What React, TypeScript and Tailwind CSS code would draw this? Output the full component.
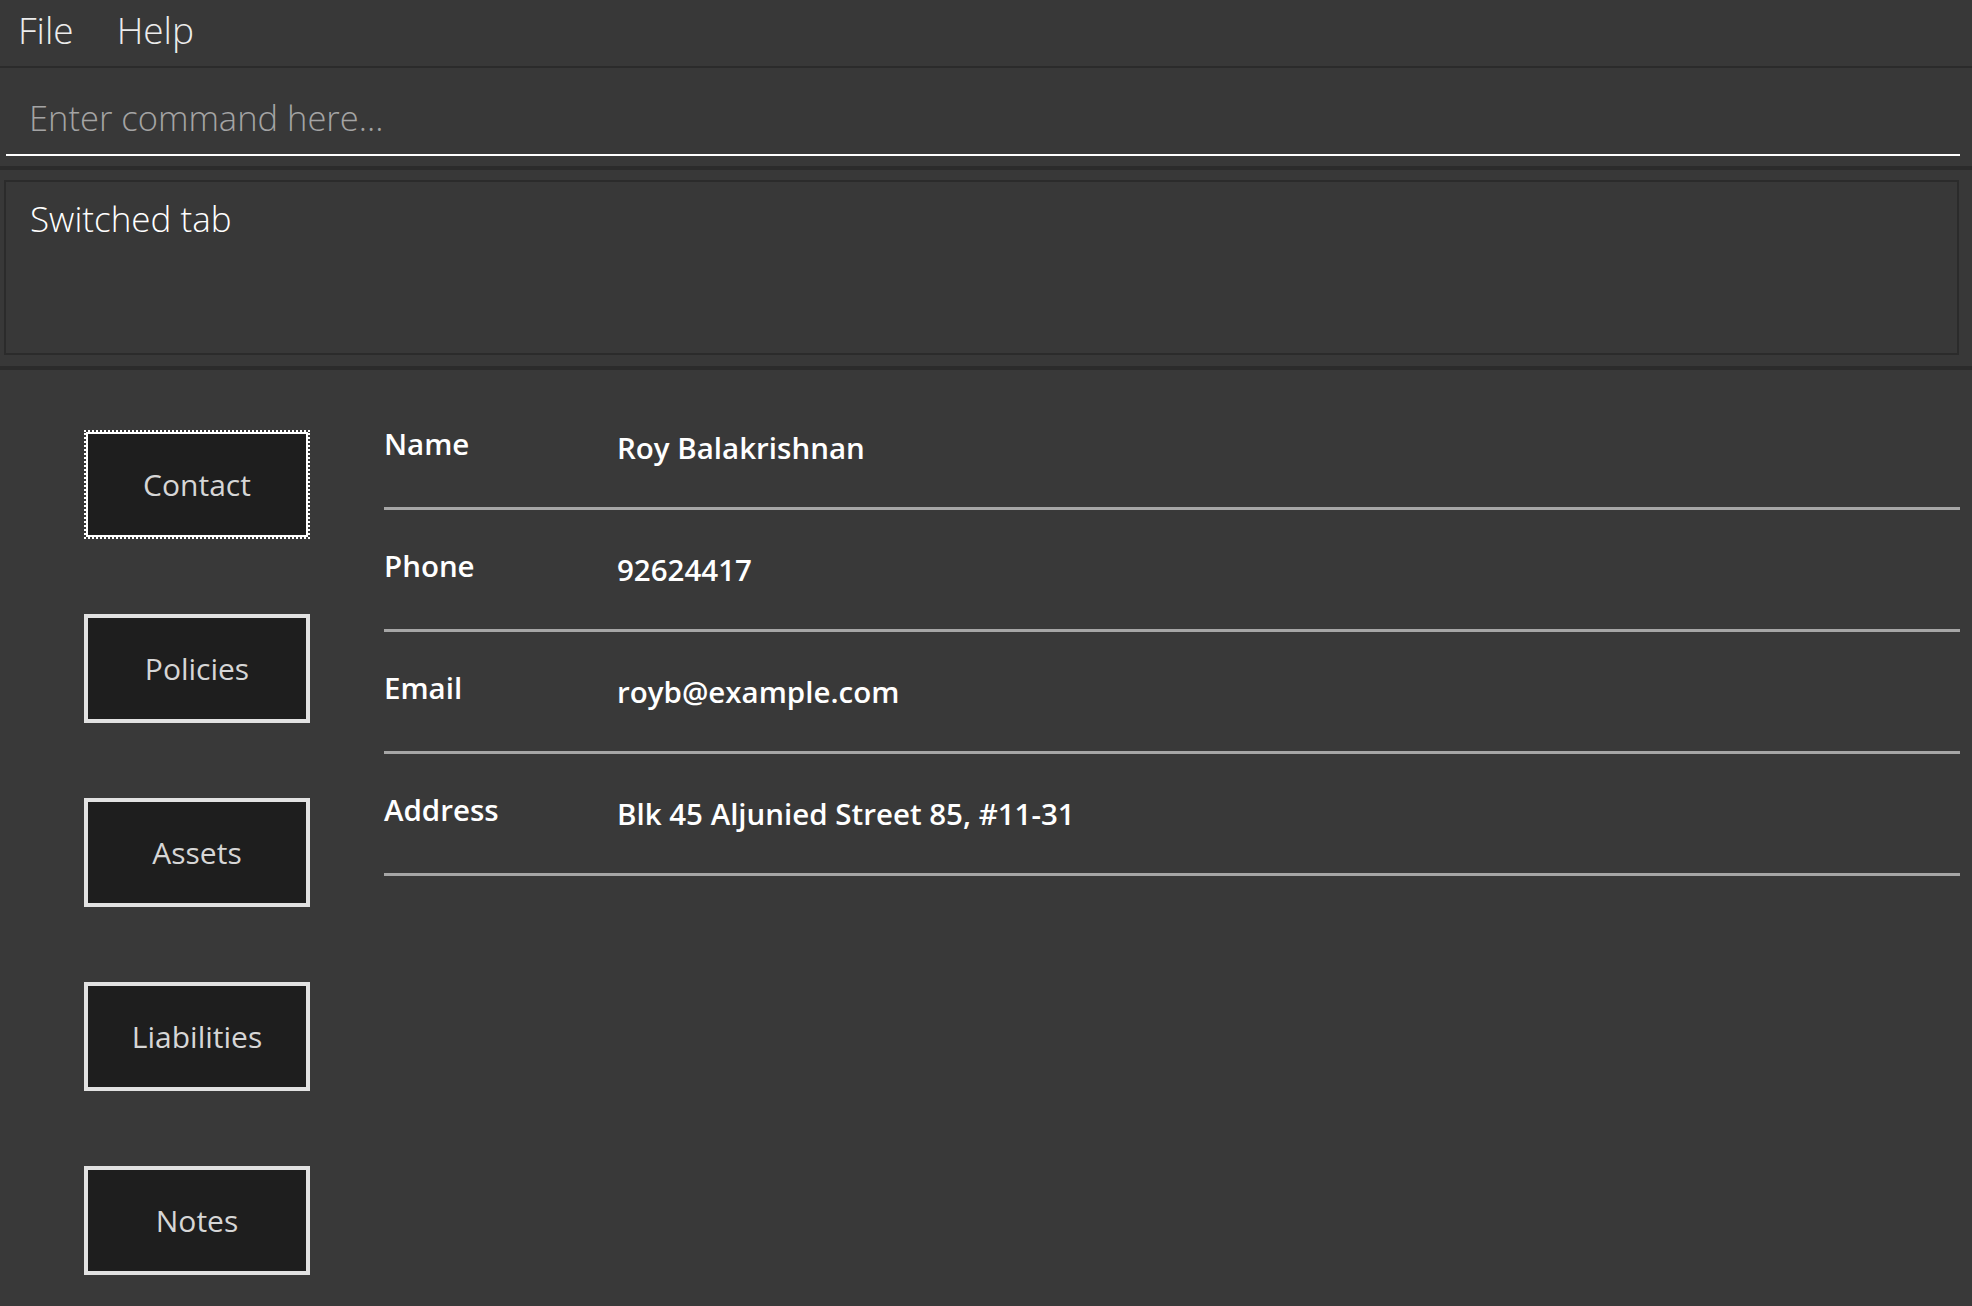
import React from "react";

const tabs = ["Contact", "Policies", "Assets", "Liabilities", "Notes"];

const details = [
  { label: "Name", value: "Roy Balakrishnan" },
  { label: "Phone", value: "92624417" },
  { label: "Email", value: "royb@example.com" },
  { label: "Address", value: "Blk 45 Aljunied Street 85, #11-31" },
];

export default function App() {
  return (
    <div className="flex h-[1306px] w-[1972px] flex-col overflow-hidden bg-[#383838] font-['Open_Sans',sans-serif]">
      {/* Menu bar */}
      <div className="flex h-[66px] shrink-0 gap-[43px] pl-[18px] pt-[2px] text-[37px] font-light text-[#ececec]">
        <span>File</span>
        <span>Help</span>
      </div>
      <div className="h-[2px] shrink-0 bg-[#2b2b2b]" />

      {/* Command box */}
      <div className="h-[98px] shrink-0 pl-[6px] pr-[12px] pt-[12px]">
        <input
          className="h-[76px] w-full border-b-2 border-white bg-transparent pl-[23px] text-[34.5px] font-light text-white outline-none placeholder:text-[#a4a4a4]"
          placeholder="Enter command here..."
        />
      </div>
      <div className="h-[4px] shrink-0 bg-[#2b2b2b]" />

      {/* Result display */}
      <div className="h-[196px] shrink-0 pl-[4px] pr-[13px] pt-[10px]">
        <div className="h-[175px] border-2 border-[#2b2b2b] pl-[24px] pt-[11px] text-[35px] font-light text-white">
          Switched tab
        </div>
      </div>
      <div className="h-[4px] shrink-0 bg-[#2b2b2b]" />

      {/* Main panel */}
      <div className="flex flex-1 bg-[#393939]">
        <div className="flex flex-col gap-[75px] pl-[84px] pt-[60px]">
          {tabs.map((tab, i) =>
            i === 0 ? (
              <div
                key={tab}
                className="h-[109px] w-[226px] border-2 border-dotted border-white"
              >
                <button className="flex h-full w-full items-center justify-center border-2 border-white bg-[#1e1e1e] text-[30px] text-[#d6d6d6]">
                  {tab}
                </button>
              </div>
            ) : (
              <button
                key={tab}
                className="flex h-[109px] w-[226px] items-center justify-center border-4 border-[#e2e2e2] bg-[#1e1e1e] text-[30px] text-[#d6d6d6]"
              >
                {tab}
              </button>
            ),
          )}
        </div>

        <div className="ml-[74px] flex-1 pr-[12px] pt-[18px]">
          {details.map((d) => (
            <div
              key={d.label}
              className="flex h-[122px] border-b-[3px] border-[#a6a6a6] text-[29.5px] font-semibold text-white"
            >
              <div className="w-[233px] pt-[34px]">{d.label}</div>
              <div className="pt-[38px]">{d.value}</div>
            </div>
          ))}
        </div>
      </div>
    </div>
  );
}
